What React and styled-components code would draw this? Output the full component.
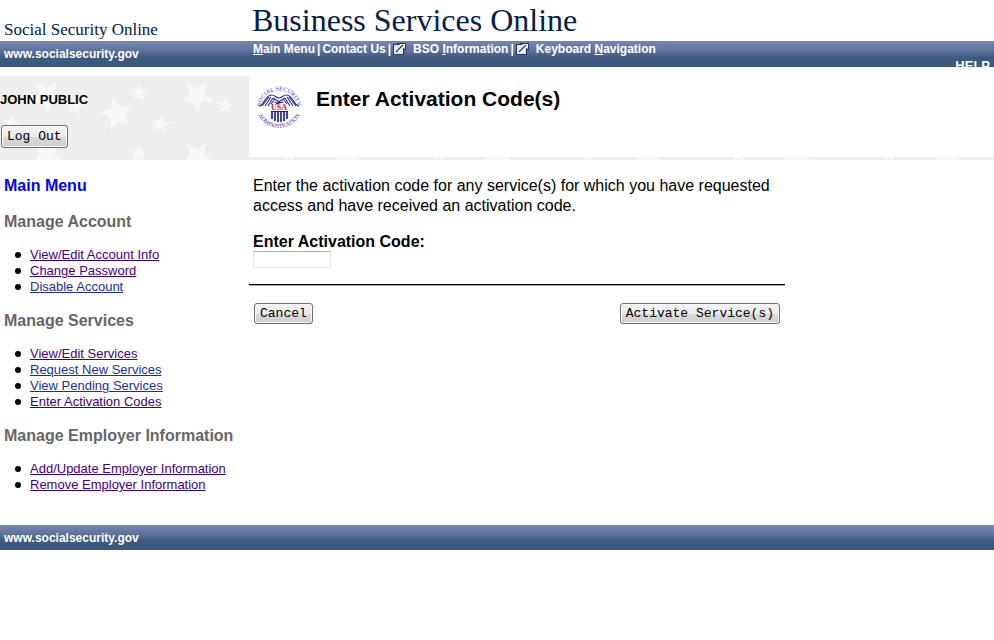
import React from 'react'
import styled, { createGlobalStyle } from 'styled-components'

const GlobalStyle = createGlobalStyle`
  body {
    margin: 0;
    background: #fff;
    color: #000;
    font-family: "Liberation Sans", Arial, sans-serif;
    font-size: 16px;
  }
`

const Masthead = styled.header`
  display: grid;
  grid-template-columns: 249px 1fr;
  align-items: end;
  height: 41px;
  color: #06204a;
  font-family: Georgia, "Liberation Serif", serif;
  white-space: nowrap;
`

const SiteName = styled.div`
  padding-left: 4px;
  font-size: 17px;
  line-height: 22px;
`

const AppName = styled.div`
  padding-left: 3px;
  font-size: 32px;
  line-height: 41px;
`

const Bar = styled.div`
  display: grid;
  grid-template-columns: 249px 1fr auto;
  height: ${({ $height }) => $height}px;
  overflow: hidden;
  color: #fff;
  font-size: 12px;
  font-weight: bold;
  background: linear-gradient(#7586b0 0%, #61749d 35%, #405a80 62%, #3d577c 100%);
`

const SiteUrl = styled.span`
  padding-left: 4px;
  line-height: 26px;
`

const TopNav = styled.nav`
  display: flex;
  align-items: center;
  gap: 2px;
  height: 16px;
  padding-left: 4px;
  white-space: nowrap;
`

const NavLink = styled.a`
  display: inline-flex;
  align-items: center;
  gap: 7px;
  color: #fff;
  text-decoration: none;
`

const HelpLink = styled.a`
  padding: 17px 4px 0 0;
  color: #fff;
  font-size: 13px;
  line-height: 15px;
  text-decoration: none;
`

const Banner = styled.section`
  position: relative;
  display: grid;
  grid-template-columns: 249px 1fr;
  min-height: 84px;
  margin-top: 9px;
  background: #eee;
`

const Stars = styled.svg`
  position: absolute;
  inset: 0;
  width: 100%;
  height: 100%;
`

const UserPanel = styled.div`
  position: relative;
  display: flex;
  flex-direction: column;
  align-items: flex-start;
  gap: 17px;
  padding-top: 16px;
`

const UserName = styled.span`
  font-size: 13px;
  font-weight: bold;
  line-height: 16px;
`

const TitlePanel = styled.div`
  position: relative;
  display: flex;
  align-items: flex-start;
  gap: 13px;
  margin-bottom: 3px;
  padding: 6px 0 0 6px;
  background: #fff;
`

const PageTitle = styled.h1`
  margin: 4px 0 0;
  font-size: 21px;
  line-height: 26px;
`

const Button = styled.button`
  height: ${({ $tall }) => ($tall ? 23 : 21)}px;
  margin: 0 1px;
  padding: 0 5px;
  border: 1px solid #707070;
  border-radius: 3px;
  background: linear-gradient(#f3f3f3 0%, #ebebeb 50%, #dadada 51%, #cdcdcd 100%);
  box-shadow: inset 0 0 0 1px #f8f8f8;
  color: #000;
  font-family: "Courier New", "Liberation Mono", monospace;
  font-size: 13px;
`

const Columns = styled.div`
  display: grid;
  grid-template-columns: 249px 1fr;
`

const Sidebar = styled.nav`
  padding: 16px 0 32px 4px;
`

const MainMenuLink = styled.a`
  color: #00f;
  font-weight: bold;
  line-height: 20px;
  text-decoration: none;
`

const MenuHeading = styled.h2`
  margin: 16px 0 15px;
  color: #666;
  font-size: 16px;
  line-height: 20px;
`

const MenuList = styled.ul`
  margin: 0;
  padding-left: 11px;
  font-size: 13px;
  line-height: 16px;
  list-style: none;
`

const MenuItem = styled.li`
  display: flex;
  align-items: center;
  gap: 9px;

  &::before {
    content: '';
    width: 6px;
    height: 6px;
    border-radius: 50%;
    background: #000;
  }
`

const MenuLink = styled.a`
  color: ${({ $visited }) => ($visited ? '#440080' : '#1a2fa0')};
`

const Main = styled.main`
  max-width: 536px;
  padding-top: 16px;
`

const Intro = styled.p`
  margin: 0 4px 16px;
  line-height: 20px;
`

const Field = styled.div`
  display: flex;
  flex-direction: column;
  align-items: flex-start;
  padding: 0 4px;
`

const FieldLabel = styled.label`
  font-weight: bold;
  line-height: 19px;
`

const CodeInput = styled.input`
  box-sizing: border-box;
  width: 78px;
  height: 17px;
  padding: 0 2px;
  border: 1px solid #e2e3ea;
  border-top-color: #abadb3;
  border-radius: 1px;
  font-size: 12px;
`

const Rule = styled.hr`
  margin: 16px 0 17px;
  border: 0;
  border-top: 1px solid #000;
  border-bottom: 1px solid #aaa;
`

const Actions = styled.div`
  display: flex;
  justify-content: space-between;
  padding: 0 4px;
`

const menu = [
  {
    title: 'Manage Account',
    links: [
      { label: 'View/Edit Account Info', visited: true },
      { label: 'Change Password', visited: true },
      { label: 'Disable Account' },
    ],
  },
  {
    title: 'Manage Services',
    links: [
      { label: 'View/Edit Services', visited: true },
      { label: 'Request New Services' },
      { label: 'View Pending Services' },
      { label: 'Enter Activation Codes', visited: true },
    ],
  },
  {
    title: 'Manage Employer Information',
    links: [
      { label: 'Add/Update Employer Information', visited: true },
      { label: 'Remove Employer Information', visited: true },
    ],
  },
]

const stars = [
  { x: 47, y: 20, r: 17, turn: 34 },
  { x: 75, y: 30, r: 9, turn: 8 },
  { x: 117, y: 38, r: 17, turn: -14 },
  { x: 139, y: 17, r: 9, turn: 3 },
  { x: 11, y: 48, r: 9, turn: 10 },
]

const starPoints = Array.from({ length: 10 }, (_, i) => {
  const radius = i % 2 ? 0.45 : 1
  const angle = (i * Math.PI) / 5
  return `${(radius * Math.sin(angle)).toFixed(3)},${(-radius * Math.cos(angle)).toFixed(3)}`
}).join(' ')

function StarField() {
  return (
    <Stars aria-hidden="true">
      <defs>
        <pattern id="stars" width="150" height="61" patternUnits="userSpaceOnUse">
          {stars.flatMap((star) =>
            [-61, 0, 61].map((dy) => (
              <polygon
                key={`${star.x}-${dy}`}
                points={starPoints}
                fill="#f8f8f8"
                transform={`translate(${star.x} ${star.y + dy}) rotate(${star.turn}) scale(${star.r})`}
              />
            ))
          )}
        </pattern>
      </defs>
      <rect width="100%" height="100%" fill="url(#stars)" />
    </Stars>
  )
}

function ExternalIcon() {
  return (
    <svg width="13" height="12" viewBox="0 0 13 12" aria-hidden="true">
      <path d="M4 0h9v7h-2v5H0V1h4z" fill="#20386f" />
      <path d="M1 2h9v9H1z" fill="#e8e8e8" />
      <path d="M6 1h6v5l-2-1.500L5 10 3 8l5.500-5z" fill="#fff" />
      <path d="M3 9l7-7" stroke="#20386f" strokeWidth="1.300" fill="none" />
    </svg>
  )
}

function Seal() {
  return (
    <svg width="48" height="48" viewBox="0 0 48 48" overflow="visible" role="img" aria-label="Social Security Administration seal">
      <defs>
        <path id="sealTop" d="M5.500 27a18.500 18.500 0 1 1 37 0" />
        <path id="sealBottom" d="M1 23a23 23 0 0 0 46 0" />
      </defs>
      <g fill="#4038a8" fontFamily="Liberation Serif, serif" textAnchor="middle">
        <text fontSize="6">
          <textPath href="#sealTop" startOffset="50%">SOCIAL SECURITY</textPath>
        </text>
        <text fontSize="6">
          <textPath href="#sealBottom" startOffset="50%">ADMINISTRATION</textPath>
        </text>
      </g>
      <g fill="none" stroke="#2a2a9c" strokeWidth="1.100">
        <path d="M4 24c3 0 4-3 6-6s4-5 7-5c3 0 4 3 7 3s4-3 7-3c3 0 5 2 7 5s3 6 6 6" />
        <path d="M7 24l7-9M10 24l6-9M13 24l5-8M16 22l4-5M41 24l-7-9M38 24l-6-9M35 24l-5-8M32 22l-4-5" />
        <path d="M18 16l8 5M30 16l-8 5M20 20c1 1 3 2 4 1s3 0 4-1" />
      </g>
      <text x="24" y="28" fill="#e8113c" fontFamily="Liberation Serif, serif" fontSize="8" fontWeight="bold" textAnchor="middle">
        USA
      </text>
      <path d="M17 29v8M20 29v10M23 29v11M26 29v11M29 29v10M32 29v8" stroke="#20209a" strokeWidth="1.700" />
      <path d="M16 29.500h17" stroke="#20209a" />
    </svg>
  )
}

function App() {
  return (
    <>
      <GlobalStyle />
      <Masthead>
        <SiteName>Social Security Online</SiteName>
        <AppName>Business Services Online</AppName>
      </Masthead>
      <Bar $height={26}>
        <SiteUrl>www.socialsecurity.gov</SiteUrl>
        <TopNav>
          <NavLink href="#menu"><span><u>M</u>ain Menu</span></NavLink>
          <span>|</span>
          <NavLink href="#contact">Contact Us</NavLink>
          <span>|</span>
          <NavLink href="#information">
            <ExternalIcon />
            <span>BSO <u>I</u>nformation</span>
          </NavLink>
          <span>|</span>
          <NavLink href="#keyboard">
            <ExternalIcon />
            <span>Keyboard <u>N</u>avigation</span>
          </NavLink>
        </TopNav>
        <HelpLink href="#help">HELP</HelpLink>
      </Bar>

      <Banner>
        <StarField />
        <UserPanel>
          <UserName>JOHN PUBLIC</UserName>
          <Button type="button" $tall>Log Out</Button>
        </UserPanel>
        <TitlePanel>
          <Seal />
          <PageTitle>Enter Activation Code(s)</PageTitle>
        </TitlePanel>
      </Banner>

      <Columns>
        <Sidebar id="menu">
          <MainMenuLink href="#menu">Main Menu</MainMenuLink>
          {menu.map((group) => (
            <React.Fragment key={group.title}>
              <MenuHeading>{group.title}</MenuHeading>
              <MenuList>
                {group.links.map((link) => (
                  <MenuItem key={link.label}>
                    <MenuLink href="#menu" $visited={link.visited}>{link.label}</MenuLink>
                  </MenuItem>
                ))}
              </MenuList>
            </React.Fragment>
          ))}
        </Sidebar>
        <Main>
          <Intro>
            Enter the activation code for any service(s) for which you have requested
            access and have received an activation code.
          </Intro>
          <Field>
            <FieldLabel htmlFor="code">Enter Activation Code:</FieldLabel>
            <CodeInput id="code" type="text" />
          </Field>
          <Rule />
          <Actions>
            <Button type="button">Cancel</Button>
            <Button type="submit">Activate Service(s)</Button>
          </Actions>
        </Main>
      </Columns>

      <Bar as="footer" $height={25}>
        <SiteUrl>www.socialsecurity.gov</SiteUrl>
      </Bar>
    </>
  )
}

export default App
